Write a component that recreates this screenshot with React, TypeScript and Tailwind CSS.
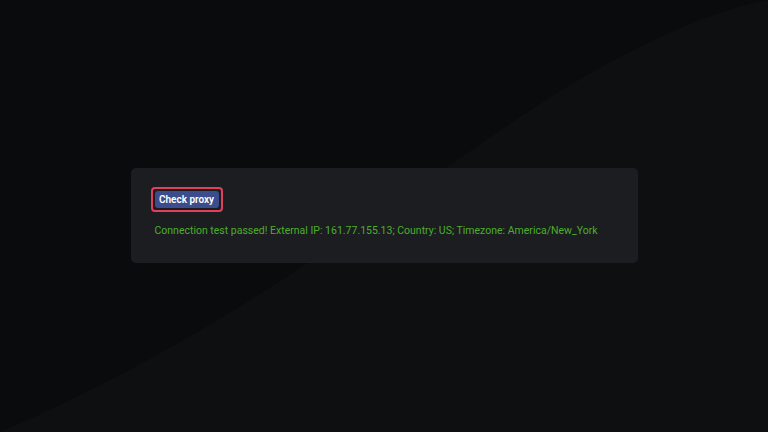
import React from "react";

export default function App() {
  return (
    <div
      className="relative w-[768px] h-[432px] overflow-hidden bg-[#0a0b0d] flex items-center justify-center"
      style={{ fontFamily: "Roboto, 'Liberation Sans', sans-serif" }}
    >
      <svg className="absolute inset-0" width="768" height="432" viewBox="0 0 768 432">
        <path
          d="M0 432 C 260 320, 430 170, 570 85 C 660 32, 725 8, 768 0 L 768 432 Z"
          fill="#0e0f11"
        />
      </svg>
      <div className="relative w-[507px] h-[95px] mb-[1px] rounded-[5px] bg-[#1c1d21] pl-[20px] pt-[18px]">
        <div className="inline-flex rounded-[4px] border-2 border-[#e2405a] p-[2px]">
          <button className="w-[64px] h-[17px] rounded-[3px] bg-[#3b4d8c] text-white text-[10px] font-semibold leading-[17px] text-center">
            Check proxy
          </button>
        </div>
        <div className="mt-[12px] ml-[4px] text-[10.5px] text-[#4cae2b] leading-[14px]">
          Connection test passed! External IP: 161.77.155.13; Country: US; Timezone: America/New_York
        </div>
      </div>
    </div>
  );
}
